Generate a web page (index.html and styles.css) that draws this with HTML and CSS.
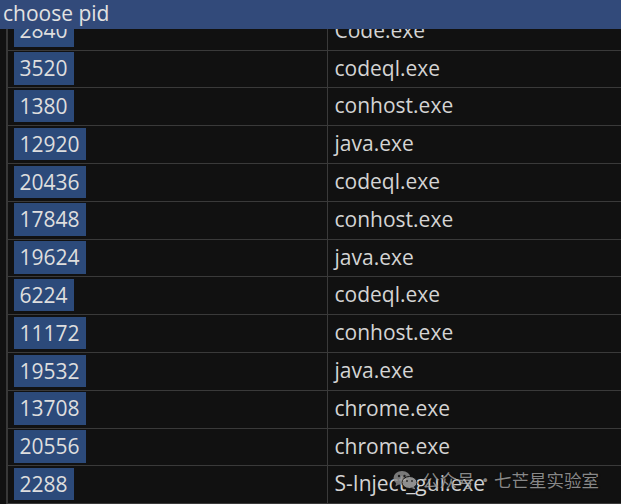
FILE: index.html
```html
<!DOCTYPE html>
<html lang="en">
<head>
    <meta charset="UTF-8">
    <title>choose pid</title>
    <link rel="stylesheet" href="styles.css">
</head>
<body>
    <div class="window">
        <!-- title bar sits over the scrolled list -->
        <div class="title">choose pid</div>

        <div class="list">
            <div class="row"><div class="pid"><span>2840</span></div><div class="name">Code.exe</div></div>
            <div class="row"><div class="pid"><span>3520</span></div><div class="name">codeql.exe</div></div>
            <div class="row"><div class="pid"><span>1380</span></div><div class="name">conhost.exe</div></div>
            <div class="row"><div class="pid"><span>12920</span></div><div class="name">java.exe</div></div>
            <div class="row"><div class="pid"><span>20436</span></div><div class="name">codeql.exe</div></div>
            <div class="row"><div class="pid"><span>17848</span></div><div class="name">conhost.exe</div></div>
            <div class="row"><div class="pid"><span>19624</span></div><div class="name">java.exe</div></div>
            <div class="row"><div class="pid"><span>6224</span></div><div class="name">codeql.exe</div></div>
            <div class="row"><div class="pid"><span>11172</span></div><div class="name">conhost.exe</div></div>
            <div class="row"><div class="pid"><span>19532</span></div><div class="name">java.exe</div></div>
            <div class="row"><div class="pid"><span>13708</span></div><div class="name">chrome.exe</div></div>
            <div class="row"><div class="pid"><span>20556</span></div><div class="name">chrome.exe</div></div>
            <div class="row"><div class="pid"><span>2288</span></div><div class="name">S-Inject_gui.exe</div></div>
        </div>

        <!-- account mark in the corner -->
        <div class="mark">
            <svg width="25" height="20" viewBox="0 0 25 20">
                <ellipse cx="9" cy="8" rx="8.5" ry="7" fill="#8c8c8c"/>
                <path d="M3 13 L2.5 16.5 L6.5 14 Z" fill="#8c8c8c"/>
                <ellipse cx="16.5" cy="12.5" rx="7.5" ry="6" fill="#a6a6a6" stroke="#111" stroke-width="1"/>
                <path d="M21 17 L22.5 19.5 L18.5 18 Z" fill="#a6a6a6"/>
                <circle cx="6" cy="6" r="1.2" fill="#222"/>
                <circle cx="11.5" cy="6" r="1.2" fill="#222"/>
                <circle cx="14" cy="11" r="1" fill="#333"/>
                <circle cx="19" cy="11" r="1" fill="#333"/>
            </svg>
            <span class="mark-text">公众号<span class="dot">·</span>七芒星实验室</span>
        </div>
    </div>
</body>
</html>
```

FILE: styles.css
```css
body {
    margin: 0;
    background: #111111;
    font-family: "Open Sans", "Noto Sans", sans-serif;
    color: #d6d6d6;
    overflow: hidden;
}
.window {
    position: relative;
    width: 621px;
    height: 504px;
    overflow: hidden;
}
.title {
    position: absolute;
    top: 0;
    left: 0;
    right: 0;
    z-index: 2;
    height: 29px;
    padding-left: 3px;
    background: #324a7a;
    color: #e2e2e2;
    font-size: 21px;
    line-height: 27px;
}
.list {
    margin-left: 6px;
    padding-top: 12.8px;
    border-left: 2px solid #383838;
    height: 100%;
}
.row {
    display: flex;
    height: 37.8px;
    box-sizing: border-box;
    border-bottom: 1.6px solid #3a3a3a;
    font-size: 21px;
}
.pid {
    width: 320px;
    flex-shrink: 0;
    border-right: 1.5px solid #3a3a3a;
    padding: 1.6px 0 0 5.5px;
    box-sizing: border-box;
}
.pid span {
    display: inline-block;
    height: 32.4px;
    line-height: 32px;
    padding: 0 6px 0 6px;
    background: #2c4a7a;
    color: #dedede;
}
.name {
    padding-left: 6.5px;
    line-height: 35px;
    color: #d4d4d4;
}
.mark {
    position: absolute;
    left: 393px;
    top: 467px;
    display: flex;
    align-items: center;
    gap: 4px;
    font-family: "Noto Sans CJK SC", sans-serif;
    font-size: 17.5px;
    color: rgba(185, 185, 185, 0.72);
    text-shadow: 0 0 2px rgba(0, 0, 0, 0.6);
}
.mark svg {
    opacity: 0.85;
}
.dot {
    margin: 0 0 0 2px;
}
```
